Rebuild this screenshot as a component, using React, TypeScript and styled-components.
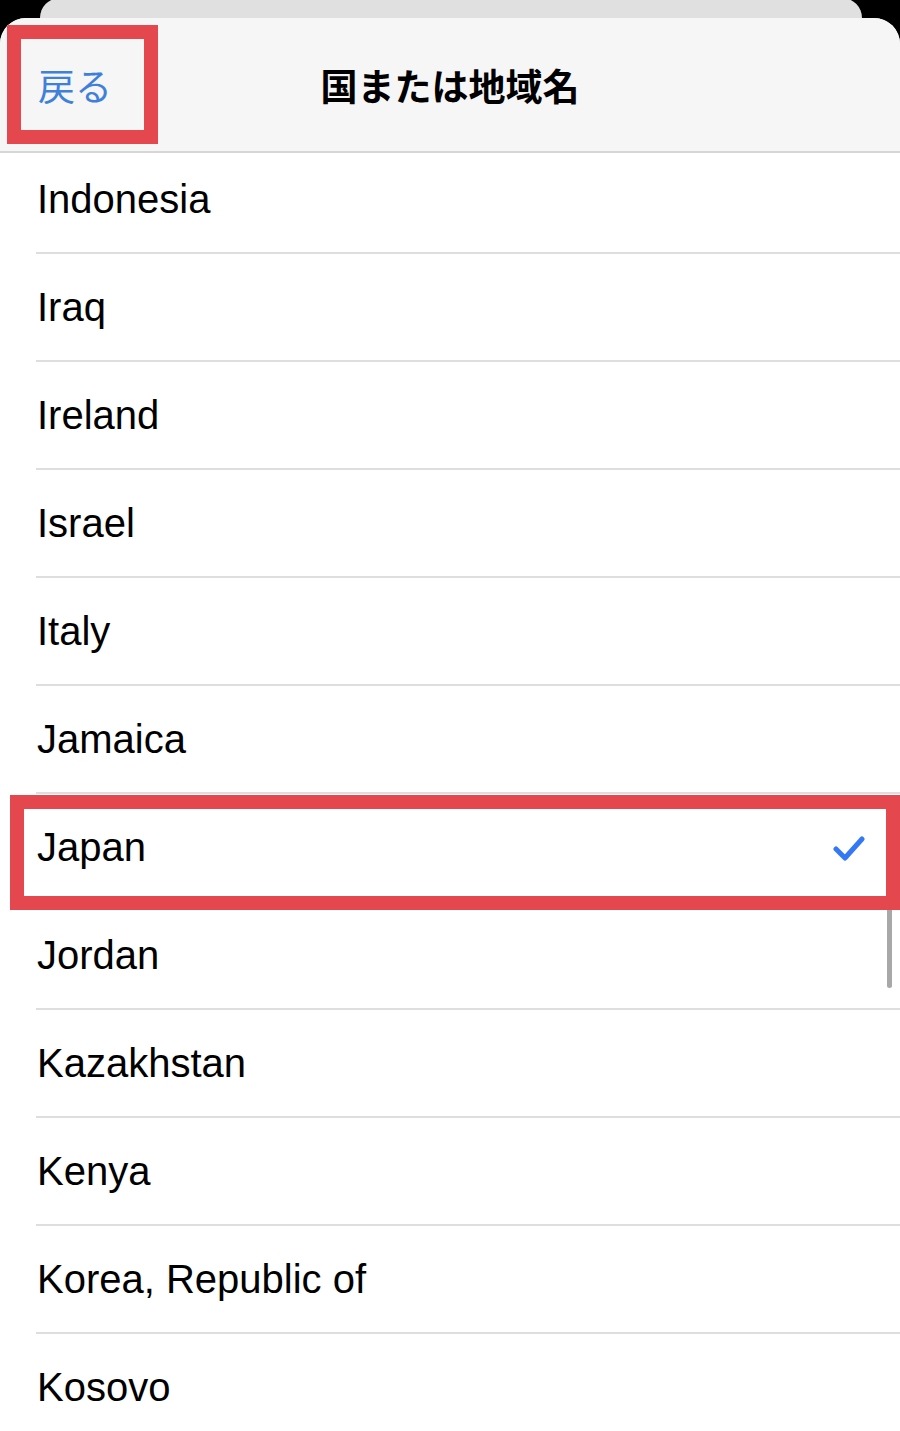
import React from "react";
import styled, { createGlobalStyle } from "styled-components";

const countries = [
  "Indonesia",
  "Iraq",
  "Ireland",
  "Israel",
  "Italy",
  "Jamaica",
  "Japan",
  "Jordan",
  "Kazakhstan",
  "Kenya",
  "Korea, Republic of",
  "Kosovo",
];

const selectedCountry = "Japan";

const App = () => {
  return (
    <Screen>
      <GlobalStyle />
      <BackCard />
      <Sheet>
        <Header>
          <BackButton>戻る</BackButton>
          <Title>国または地域名</Title>
          <span />
        </Header>
        <ListViewport>
          <ListInner>
            {countries.map((name) => (
              <Row key={name}>
                <RowLabel>{name}</RowLabel>
                {name === selectedCountry && (
                  <>
                    <Check viewBox="0 0 32 28">
                      <path d="M3 15 L12 24 L29 5" />
                    </Check>
                    <Highlight />
                  </>
                )}
              </Row>
            ))}
          </ListInner>
          <ScrollThumb />
        </ListViewport>
      </Sheet>
    </Screen>
  );
};

export default App;

const GlobalStyle = createGlobalStyle`
  html, body {
    margin: 0;
    padding: 0;
    background: #000;
  }
`;

const Screen = styled.div`
  width: 900px;
  height: 1431px;
  overflow: hidden;
  background: #000;
  display: flex;
  flex-direction: column;
  font-family: "Liberation Sans", Arial, sans-serif;
`;

const BackCard = styled.div`
  height: 20px;
  margin: -2px 38px 0 40px;
  background: #e0e0e0;
  border-radius: 22px 22px 0 0;
  flex-shrink: 0;
`;

const Sheet = styled.div`
  flex: 1;
  background: #fff;
  border-radius: 26px 26px 0 0;
  overflow: hidden;
  display: flex;
  flex-direction: column;
`;

const Header = styled.div`
  height: 135px;
  background: #f6f6f6;
  border-bottom: 2px solid #d6d6d6;
  display: grid;
  grid-template-columns: 1fr auto 1fr;
  align-items: start;
  padding: 7px 0 0 7px;
  box-sizing: border-box;
  flex-shrink: 0;
`;

const BackButton = styled.div`
  justify-self: start;
  width: 151px;
  height: 119px;
  box-sizing: border-box;
  border: 14px solid #e5474f;
  padding: 2px 0 0 17px;
  display: flex;
  align-items: center;
  font-family: "Noto Sans CJK JP", sans-serif;
  font-size: 37px;
  color: #3f80da;
  line-height: 1;
`;

const Title = styled.div`
  font-family: "Noto Sans CJK JP", sans-serif;
  font-weight: 700;
  font-size: 37px;
  color: #000;
  line-height: 1;
  margin-top: 42px;
  margin-left: -7px;
`;

const ListViewport = styled.div`
  position: relative;
  flex: 1;
  overflow: hidden;
`;

const ListInner = styled.div`
  margin-top: -7px;
  display: flex;
  flex-direction: column;
`;

const Row = styled.div`
  position: relative;
  height: 108px;
  flex-shrink: 0;
  display: flex;
  align-items: center;
  justify-content: space-between;
  padding: 0 35px 0 37px;
  box-sizing: border-box;
  &::after {
    content: "";
    position: absolute;
    left: 36px;
    right: 0;
    bottom: 0;
    height: 2px;
    background: #dedede;
  }
`;

const RowLabel = styled.span`
  font-size: 40px;
  color: #000;
  line-height: 1;
  margin-top: -2px;
`;

const Check = styled.svg`
  width: 32px;
  height: 28px;
  fill: none;
  stroke: #3478f6;
  stroke-width: 5;
  stroke-linecap: round;
  stroke-linejoin: round;
`;

const Highlight = styled.div`
  position: absolute;
  left: 10px;
  right: 0;
  top: 1px;
  bottom: -8px;
  border: 14px solid #e5474f;
  z-index: 2;
  pointer-events: none;
`;

const ScrollThumb = styled.div`
  position: absolute;
  right: 8px;
  top: 745px;
  width: 5px;
  height: 90px;
  border-radius: 3px;
  background: #a8a8a8;
  z-index: 1;
`;
